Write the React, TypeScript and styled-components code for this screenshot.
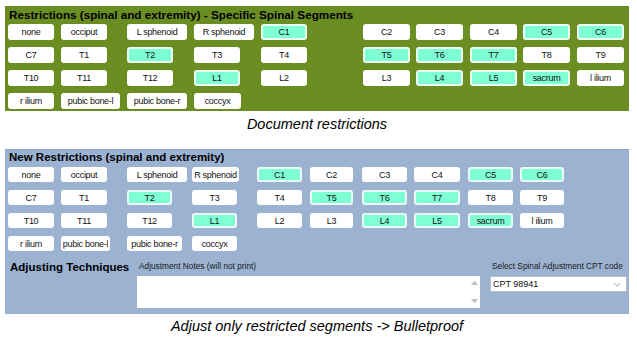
import styled, { createGlobalStyle } from "styled-components";

const ACTIVE = new Set(["C1", "T2", "L1", "C5", "C6", "T5", "T6", "T7", "L4", "L5", "sacrum"]);

// top panel: two blocks of buttons
const topLeft = [
   ["none", "occiput", "L sphenoid", "R sphenoid", "C1"],
   ["C7", "T1", "T2", "T3", "T4"],
   ["T10", "T11", "T12", "L1", "L2"],
   ["r ilium", "pubic bone-l", "pubic bone-r", "coccyx"],
];
const topRight = [
   ["C2", "C3", "C4", "C5", "C6"],
   ["T5", "T6", "T7", "T8", "T9"],
   ["L3", "L4", "L5", "sacrum", "l ilium"],
];
const topWide: Record<string, number> = {
   "L sphenoid": 60,
   "R sphenoid": 60,
   "pubic bone-l": 59,
   "pubic bone-r": 60,
   coccyx: 47,
};

// bottom panel: one long block
const bottomRows = [
   ["none", "occiput", "L sphenoid", "R sphenoid", "C1", "C2", "C3", "C4", "C5", "C6"],
   ["C7", "T1", "T2", "T3", "T4", "T5", "T6", "T7", "T8", "T9"],
   ["T10", "T11", "T12", "L1", "L2", "L3", "L4", "L5", "sacrum", "l ilium"],
   ["r ilium", "pubic bone-l", "pubic bone-r", "coccyx"],
];
const bottomColW = [46, 46, 45, 45, 45, 43, 45, 46, 45, 44];
const bottomWide: Record<string, number> = {
   "L sphenoid": 60,
   "R sphenoid": 47,
   "pubic bone-l": 49,
   "pubic bone-r": 55,
};

const GlobalStyle = createGlobalStyle`
   body {
      margin: 0;
      background: #ffffff;
      font-family: "Liberation Sans", Arial, sans-serif;
   }
`;

const App = () => {
   return (
      <>
         <GlobalStyle />
         <Page>
            <GreenPanel>
               <PanelTitle>Restrictions (spinal and extremity) - Specific Spinal Segments</PanelTitle>
               <TopBlocks>
                  <SegGrid $cols="53px 66px 67px 67px 46px" $rowH={16} $gap={7}>
                     {topLeft.map((row) =>
                        row.map((s) => (
                           <SegBtn key={s} $on={ACTIVE.has(s)} $w={topWide[s] ?? 46}>
                              {s}
                           </SegBtn>
                        ))
                     )}
                  </SegGrid>
                  <SegGrid $cols="53px 54px 53px 54px 47px" $rowH={16} $gap={7}>
                     {topRight.map((row) =>
                        row.map((s) => (
                           <SegBtn key={s} $on={ACTIVE.has(s)} $w={47}>
                              {s}
                           </SegBtn>
                        ))
                     )}
                  </SegGrid>
               </TopBlocks>
            </GreenPanel>
            <Caption>Document restrictions</Caption>

            <BluePanel>
               <PanelTitle>New Restrictions (spinal and extremity)</PanelTitle>
               <SegGrid $cols="53px 66px 65px 65px 53px 52px 52px 54px 52px 46px" $rowH={15} $gap={8}>
                  {bottomRows.map((row) =>
                     row.map((s, i) => (
                        <SegBtn key={s} $on={ACTIVE.has(s)} $w={bottomWide[s] ?? bottomColW[i]}>
                           {s}
                        </SegBtn>
                     ))
                  )}
               </SegGrid>

               <LowerRow>
                  <SectionHead>Adjusting Techniques</SectionHead>
                  <Field $w={343}>
                     <SmallLabel>Adjustment Notes (will not print)</SmallLabel>
                     <NotesBox>
                        <NotesInput />
                        <ScrollStrip>
                           <Arrow viewBox="0 0 7 5">
                              <polygon points="0,5 3.5,0.5 7,5" />
                           </Arrow>
                           <Arrow viewBox="0 0 7 5">
                              <polygon points="0,0 3.5,4.5 7,0" />
                           </Arrow>
                        </ScrollStrip>
                     </NotesBox>
                  </Field>
                  <Field $w={137}>
                     <SmallLabel>Select Spinal Adjustment CPT code</SmallLabel>
                     <ComboBox>
                        <span>CPT 98941</span>
                        <Chevron viewBox="0 0 10 6">
                           <polyline points="1,1 5,5 9,1" />
                        </Chevron>
                     </ComboBox>
                  </Field>
               </LowerRow>
            </BluePanel>
            <Caption $top={2}>Adjust only restricted segments -&gt; Bulletproof</Caption>
         </Page>
      </>
   );
};

export default App;

const Page = styled.div`
   width: 624px;
   padding: 6px 0 0 5px;
   display: flex;
   flex-direction: column;
`;

const GreenPanel = styled.div`
   height: 105px;
   box-sizing: border-box;
   background: #6b8e23;
   padding: 2px 5px 0 3px;
   display: flex;
   flex-direction: column;
`;

const BluePanel = styled.div`
   height: 165px;
   box-sizing: border-box;
   background: #9bb2d1;
   border-top: 1px solid #8aa2c2;
   padding: 0 2px 0 3px;
   margin-top: 15px;
   display: flex;
   flex-direction: column;
`;

const PanelTitle = styled.div`
   height: 14px;
   line-height: 14px;
   margin: 0 0 2px 1px;
   font-size: 11.7px;
   font-weight: bold;
   color: #000;
   white-space: nowrap;

   ${BluePanel} & {
      margin-bottom: 3px;
      font-size: 11.5px;
   }
`;

const TopBlocks = styled.div`
   display: flex;
   flex-direction: row;
   gap: 56px;
   align-items: flex-start;
`;

const SegGrid = styled.div<{ $cols: string; $rowH: number; $gap: number }>`
   display: grid;
   grid-template-columns: ${(p) => p.$cols};
   grid-auto-rows: ${(p) => p.$rowH}px;
   row-gap: ${(p) => p.$gap}px;
`;

const SegBtn = styled.div<{ $on: boolean; $w: number }>`
   width: ${(p) => p.$w}px;
   box-sizing: border-box;
   justify-self: start;
   display: flex;
   align-items: center;
   justify-content: center;
   background: ${(p) => (p.$on ? "#7fffd4" : "#ffffff")};
   border: 2px solid ${(p) => (p.$on ? "#eefaf4" : "#ffffff")};
   border-radius: 3px;
   font-size: 9px;
   letter-spacing: -0.3px;
   color: #111;
   white-space: nowrap;
   overflow: hidden;
`;

const Caption = styled.div<{ $top?: number }>`
   margin-top: ${(p) => p.$top ?? 3}px;
   height: 20px;
   line-height: 20px;
   text-align: center;
   font-size: 14.5px;
   font-style: italic;
   color: #000;
`;

const LowerRow = styled.div`
   margin-top: 9px;
   display: flex;
   flex-direction: row;
   align-items: flex-start;
`;

const SectionHead = styled.div`
   width: 127px;
   padding: 1px 0 0 2px;
   line-height: 13px;
   font-size: 11.5px;
   font-weight: bold;
   color: #000;
   white-space: nowrap;
`;

const Field = styled.div<{ $w: number }>`
   width: ${(p) => p.$w}px;
   display: flex;
   flex-direction: column;
   gap: 3px;

   & + & {
      margin-left: 10px;
   }
`;

const SmallLabel = styled.div`
   height: 13px;
   line-height: 13px;
   padding-left: 2px;
   font-size: 8.3px;
   color: #1a1a1a;
   white-space: nowrap;
`;

const NotesBox = styled.div`
   height: 32px;
   display: flex;
   flex-direction: row;
   background: #ffffff;
`;

const NotesInput = styled.textarea`
   flex: 1;
   border: none;
   outline: none;
   resize: none;
   background: transparent;
   padding: 2px;
   font-family: "Liberation Sans", Arial, sans-serif;
   font-size: 9px;
`;

const ScrollStrip = styled.div`
   width: 12px;
   display: flex;
   flex-direction: column;
   justify-content: space-between;
   align-items: center;
   padding: 4px 0;
   box-sizing: border-box;
`;

const Arrow = styled.svg`
   width: 7px;
   height: 5px;
   fill: #c2c2c2;
`;

const ComboBox = styled.div`
   height: 16px;
   box-sizing: border-box;
   background: #ffffff;
   border: 1px solid #b8bfc8;
   display: flex;
   flex-direction: row;
   align-items: center;
   justify-content: space-between;
   padding: 0 5px 0 2px;
   font-size: 9px;
   color: #111;
`;

const Chevron = styled.svg`
   width: 8px;
   height: 5px;
   fill: none;
   stroke: #8a8a8a;
   stroke-width: 1;
`;
